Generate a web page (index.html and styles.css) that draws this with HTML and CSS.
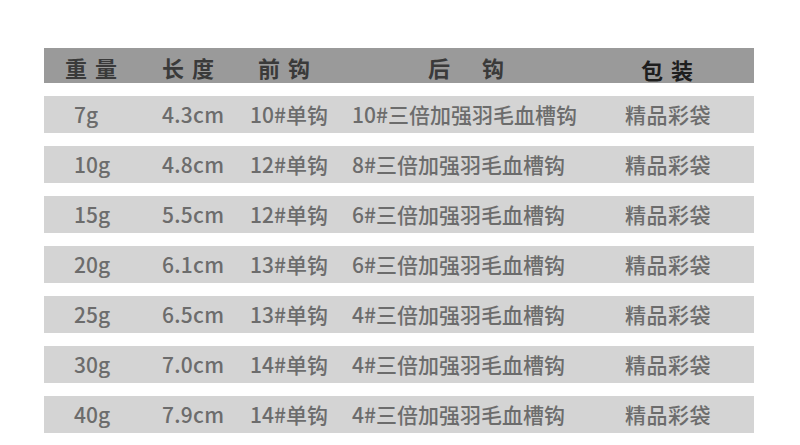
FILE: index.html
```html
<!DOCTYPE html>
<html lang="zh">
<head>
<meta charset="utf-8">
<link rel="stylesheet" href="styles.css">
</head>
<body>
<div class="table">
  <div class="row head">
    <div class="c1">重量</div>
    <div class="c2">长度</div>
    <div class="c3">前钩</div>
    <div class="c4">后<span class="gap"></span>钩</div>
    <div class="c5 dark">包装</div>
  </div>
  <div class="row data">
    <div class="c1">7g</div><div class="c2">4.3cm</div><div class="c3">10#单钩</div><div class="c4">10#三倍加强羽毛血槽钩</div><div class="c5">精品彩袋</div>
  </div>
  <div class="row data">
    <div class="c1">10g</div><div class="c2">4.8cm</div><div class="c3">12#单钩</div><div class="c4">8#三倍加强羽毛血槽钩</div><div class="c5">精品彩袋</div>
  </div>
  <div class="row data">
    <div class="c1">15g</div><div class="c2">5.5cm</div><div class="c3">12#单钩</div><div class="c4">6#三倍加强羽毛血槽钩</div><div class="c5">精品彩袋</div>
  </div>
  <div class="row data">
    <div class="c1">20g</div><div class="c2">6.1cm</div><div class="c3">13#单钩</div><div class="c4">6#三倍加强羽毛血槽钩</div><div class="c5">精品彩袋</div>
  </div>
  <div class="row data">
    <div class="c1">25g</div><div class="c2">6.5cm</div><div class="c3">13#单钩</div><div class="c4">4#三倍加强羽毛血槽钩</div><div class="c5">精品彩袋</div>
  </div>
  <div class="row data">
    <div class="c1">30g</div><div class="c2">7.0cm</div><div class="c3">14#单钩</div><div class="c4">4#三倍加强羽毛血槽钩</div><div class="c5">精品彩袋</div>
  </div>
  <div class="row data">
    <div class="c1">40g</div><div class="c2">7.9cm</div><div class="c3">14#单钩</div><div class="c4">4#三倍加强羽毛血槽钩</div><div class="c5">精品彩袋</div>
  </div>
</div>
</body>
</html>
```
FILE: styles.css
```css
html, body {
  margin: 0;
  padding: 0;
  background: #ffffff;
}
body {
  font-family: "Noto Sans CJK SC", "Noto Sans", sans-serif;
}
.table {
  width: 710px;
  margin: 48px 0 0 44px;
  display: flex;
  flex-direction: column;
  gap: 13px;
}
.row {
  display: grid;
  grid-template-columns: 106px 88px 102px 273px 141px;
  align-items: center;
  white-space: nowrap;
}
.head {
  height: 35px;
  background: #9a9a9a;
  color: #3a3a3a;
  font-size: 22px;
  font-weight: 700;
  letter-spacing: 8px;
  line-height: 35px;
}
.head .c1 { padding-left: 21px; }
.head .c2 { padding-left: 12px; }
.head .c3 { padding-left: 20px; }
.head .c4 { padding-left: 88px; }
.head .c5 { padding-left: 28px; }
.head .dark {
  color: #1e1e1e;
  padding-top: 4px;
}
.gap {
  display: inline-block;
  width: 24px;
}
.data {
  height: 37px;
  background: #d4d4d4;
  color: #6c6c6c;
  font-size: 21px;
  font-weight: 500;
  line-height: 37px;
}
.data .c1 { padding-left: 30px; }
.data .c2 { padding-left: 12px; letter-spacing: 0.3px; }
.data .c3 { padding-left: 12px; }
.data .c4 { padding-left: 12px; }
.data .c5 { padding-left: 12px; letter-spacing: 0.5px; }
```
